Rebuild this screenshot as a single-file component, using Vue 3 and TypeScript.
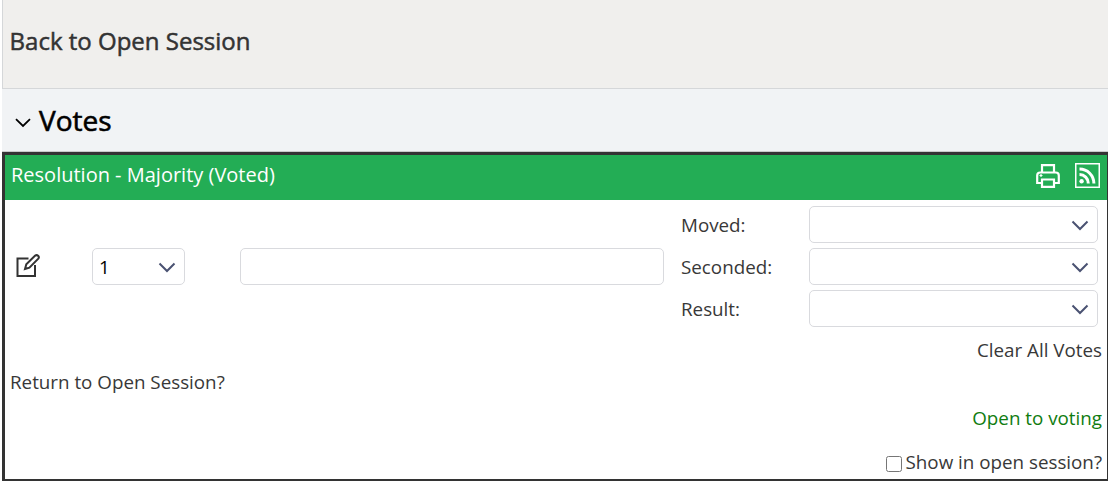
<script setup lang="ts">
import { ref } from 'vue'

interface VoteField {
  label: string
  value: string
}

const order = ref('1')
const description = ref('')
const showInOpenSession = ref(false)

const fields = ref<VoteField[]>([
  { label: 'Moved:', value: '' },
  { label: 'Seconded:', value: '' },
  { label: 'Result:', value: '' }
])
</script>

<template>
  <div class="page">
    <header class="session-bar">
      <a class="back-link">Back to Open Session</a>
    </header>

    <div class="section-head">
      <svg class="caret" width="16" height="10" viewBox="0 0 16 10">
        <path d="M1 1.2 L8 8 L15 1.2" fill="none" stroke="#000" stroke-width="1.8" />
      </svg>
      <h2>Votes</h2>
    </div>

    <section class="vote-panel">
      <div class="panel-title">
        <span class="title-text">Resolution - Majority (Voted)</span>
        <div class="title-icons">
          <!-- Print -->
          <svg width="24" height="24" viewBox="0 0 24 24" fill="none" stroke="#fff" stroke-width="2.2">
            <path d="M6 8V1.2h12V8" />
            <path d="M6 19H1.2v-7.5q0-3 3-3h15.6q3 0 3 3V19H18" />
            <path d="M6 15.5h12v7.3H6z" />
            <path d="M3.5 11.5h3M5 10v3" stroke-width="1.2" />
          </svg>
          <!-- Feed -->
          <svg width="25" height="25" viewBox="0 0 25 25" fill="none" stroke="#fff">
            <rect x="0.75" y="0.75" width="23.5" height="23.5" stroke-width="1.5" />
            <path d="M4.5 11.6a8.8 8.8 0 0 1 8.8 8.8M4.5 6a14.4 14.4 0 0 1 14.4 14.4" stroke-width="3" />
            <circle cx="6.6" cy="18.2" r="2.2" fill="#fff" stroke="none" />
          </svg>
        </div>
      </div>

      <div class="vote-row">
        <svg class="edit" width="24" height="24" viewBox="0 0 24 24" fill="none" stroke="#333" stroke-width="2">
          <path d="M12.5 4.5H1.5V22H19V11" />
          <path d="M9 15l1.3-4.8L19.2 1.6q1.5-1.1 2.9.2t.2 2.9L13.4 13.6z" />
        </svg>

        <div class="select order">
          <span>{{ order }}</span>
          <svg width="18" height="11" viewBox="0 0 18 11">
            <path d="M1.5 1.5 L9 9 L16.5 1.5" />
          </svg>
        </div>

        <input v-model="description" class="description" type="text" />

        <div class="fields">
          <template v-for="field in fields" :key="field.label">
            <label>{{ field.label }}</label>
            <div class="select">
              <span>{{ field.value }}</span>
              <svg width="18" height="11" viewBox="0 0 18 11">
                <path d="M1.5 1.5 L9 9 L16.5 1.5" />
              </svg>
            </div>
          </template>
        </div>
      </div>

      <div class="line clear"><a>Clear All Votes</a></div>
      <div class="line return"><a>Return to Open Session?</a></div>
      <div class="line open"><a>Open to voting</a></div>
      <label class="line show">
        <input v-model="showInOpenSession" type="checkbox" />
        <span>Show in open session?</span>
      </label>
    </section>
  </div>
</template>

<style>
body {
  margin: 0;
  background: #fff;
  overflow: hidden;
}
</style>

<style scoped>
.page {
  box-sizing: border-box;
  height: 486px;
  padding-left: 2px;
  font-family: 'Open Sans', 'Noto Sans', sans-serif;
  font-size: 18.8px;
  color: #383838;
}

.session-bar {
  box-sizing: border-box;
  height: 89px;
  padding: 24px 0 0 6.6px;
  border-left: 1px solid #d5d7d9;
  border-bottom: 1px solid #d5d7d9;
  background: #f0efed;
}

.back-link {
  display: block;
  font-size: 24px;
  line-height: 34px;
  color: #333;
  -webkit-text-stroke: 0.5px #333;
}

.section-head {
  box-sizing: border-box;
  display: flex;
  align-items: center;
  gap: 8px;
  height: 63px;
  padding-left: 13px;
  border-bottom: 1px solid #c8cacb;
  background: #f1f3f5;
}

.caret {
  margin-top: 6px;
}

h2 {
  margin: 0;
  font-size: 28px;
  font-weight: 400;
  line-height: 38px;
  color: #000;
  -webkit-text-stroke: 0.6px #000;
}

.vote-panel {
  box-sizing: border-box;
  height: 329px;
  border: solid #333;
  border-width: 3px 1px 2px 3px;
}

.panel-title {
  display: flex;
  justify-content: space-between;
  height: 45px;
  padding: 0 7px 0 6px;
  background: #23ad55;
  color: #fff;
}

.title-text {
  font-size: 20px;
  line-height: 40px;
}

.title-icons {
  display: flex;
  gap: 15px;
  padding-top: 8px;
}

.title-icons svg {
  display: block;
}

.title-icons svg:first-child {
  margin-top: 1px;
}

.vote-row {
  display: flex;
  align-items: center;
  padding: 6px 9px 0 11px;
}

.edit {
  margin: -1px 52px 0 0;
}

.select {
  box-sizing: border-box;
  display: flex;
  align-items: center;
  justify-content: space-between;
  height: 37px;
  padding: 0 8px 0 6px;
  border: 1px solid #d9dade;
  border-radius: 5px;
  background: #fff;
  color: #000;
}

.select svg {
  margin-top: 1px;
}

.select path {
  fill: none;
  stroke: #4a5272;
  stroke-width: 2;
}

.order {
  width: 93px;
  margin-right: 55px;
}

.description {
  box-sizing: border-box;
  width: 424px;
  height: 37px;
  margin: 0 17px 0 0;
  border: 1px solid #d9dade;
  border-radius: 5px;
  font: inherit;
}

.fields {
  display: grid;
  grid-template-columns: 128px 289px;
  row-gap: 5px;
  align-items: center;
}

.line {
  display: flex;
  justify-content: flex-end;
  padding: 0 5px;
  line-height: 26px;
}

.clear {
  margin-top: 10px;
}

.return {
  justify-content: flex-start;
  margin-top: 6px;
}

.open {
  margin-top: 10px;
  color: #107c10;
}

.show {
  align-items: center;
  margin-top: 18px;
}

.show input {
  width: 16px;
  height: 16px;
  margin: 3px 4px 0 0;
}
</style>
